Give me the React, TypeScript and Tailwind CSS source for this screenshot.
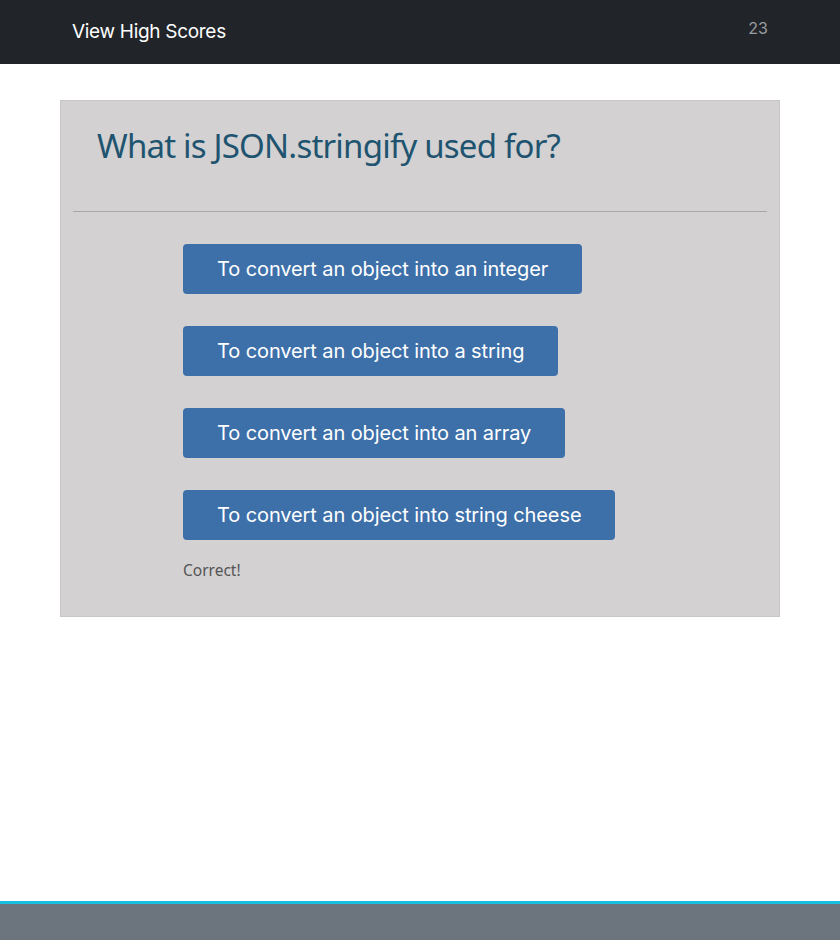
import React from 'react';

const answers = [
  'To convert an object into an integer',
  'To convert an object into a string',
  'To convert an object into an array',
  'To convert an object into string cheese',
];

export default function App() {
  return (
    <div className="min-h-[940px] flex flex-col bg-white font-['Inter','Liberation_Sans',sans-serif]">
      {/* Navbar */}
      <nav className="h-16 bg-[#212529] flex items-center justify-between pl-[72px] pr-[72px]">
        <a className="text-white text-[19px] tracking-[-0.3px]">View High Scores</a>
        <span className="text-[#9a9c9f] text-[16px] -mt-[8px]">23</span>
      </nav>

      {/* Quiz card */}
      <main className="flex-1 px-[60px] pt-9">
        <div className="bg-[#d3d1d2] border border-[#c8c6c7] pb-[34px]">
          <h1 className="pl-[36px] pt-[23px] pb-[43px] text-[33px] text-[#1f5470] font-['Noto_Sans','Open_Sans',sans-serif] tracking-[-0.8px] leading-[44px]">
            What is JSON.stringify used for?
          </h1>
          <hr className="mx-3 border-t border-[#a9a7a8]" />
          <div className="pl-[122px] pt-8 flex flex-col items-start gap-8">
            {answers.map((a) => (
              <button
                key={a}
                className="h-[50px] px-[34px] rounded bg-[#3d6fa9] text-white text-[20px] tracking-[-0.1px]"
              >
                {a}
              </button>
            ))}
          </div>
          <p className="pl-[122px] pt-[19px] text-[15.5px] text-[#555] font-['Noto_Sans','Open_Sans',sans-serif]">
            Correct!
          </p>
        </div>
      </main>

      {/* Footer */}
      <footer className="h-[39px] bg-[#6c757d] border-t-[3px] border-[#17c0e0]" />
    </div>
  );
}
